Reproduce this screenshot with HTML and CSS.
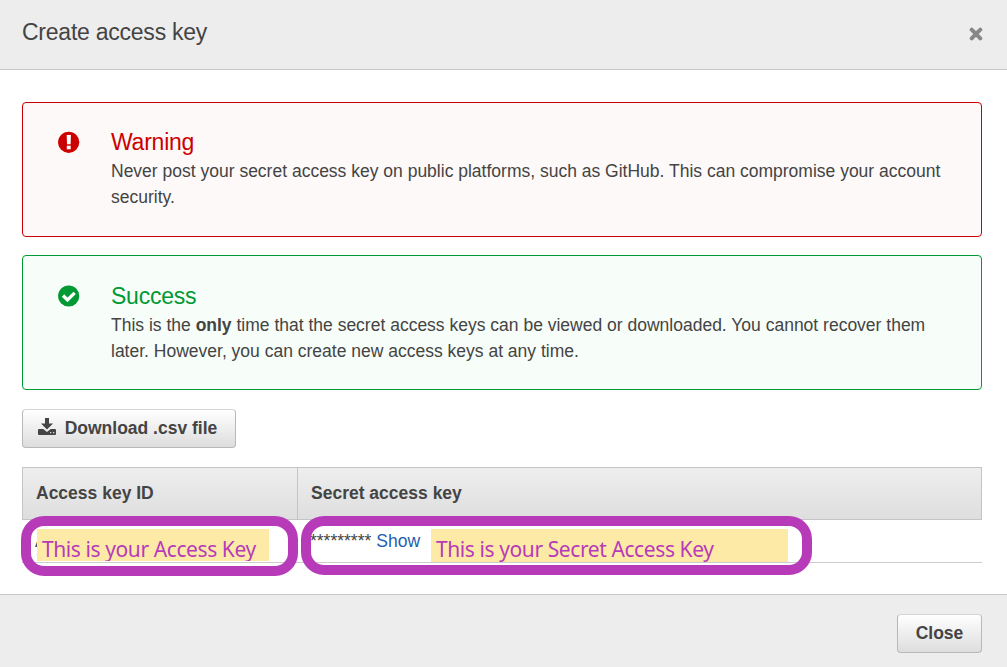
FILE: index.html
```html
<!DOCTYPE html>
<html lang="en">
<head>
<meta charset="utf-8">
<title>Create access key</title>
<link rel="stylesheet" href="styles.css">
</head>
<body>
<div class="dialog">
  <header class="dialog-header">
    <h1 class="title">Create access key</h1>
    <svg class="close-icon" viewBox="0 0 14 14"><path d="M2.7 2.7L11.3 11.3M11.3 2.7L2.7 11.3"/></svg>
  </header>
  <main class="dialog-body">
    <section class="alert warning">
      <svg class="alert-icon" viewBox="0 0 22 22"><circle cx="10.7" cy="11.3" r="10.6" fill="#c00"/><path d="M8.7 4h4.2l-.3 9.2H9z" fill="#fff"/><path d="M8.8 14.7h3.9v3.6H8.8z" fill="#fff"/></svg>
      <div class="alert-content">
        <h2 class="alert-title">Warning</h2>
        <p class="alert-text">Never post your secret access key on public platforms, such as GitHub. This can compromise your account<br>security.</p>
      </div>
    </section>
    <section class="alert success">
      <svg class="alert-icon" viewBox="0 0 22 22"><circle cx="10.7" cy="11" r="10.6" fill="#093"/><path d="M5 10.5L9.5 15L16.7 7.8" fill="none" stroke="#fff" stroke-width="3.3"/></svg>
      <div class="alert-content">
        <h2 class="alert-title">Success</h2>
        <p class="alert-text">This is the <b>only</b> time that the secret access keys can be viewed or downloaded. You cannot recover them<br>later. However, you can create new access keys at any time.</p>
      </div>
    </section>
    <button class="button download">
      <svg class="download-icon" viewBox="0 0 18 17"><path d="M7 0h4v5.5h4L9 11.5L3 5.5h4zM1 11h4.3L9 14l3.7-3H17q1 0 1 1v4q0 1-1 1H1q-1 0-1-1v-4q0-1 1-1z" fill="#444"/><path d="M12 14h1.3v1.2H12zM15 14h1.3v1.2H15z" fill="#ddd"/></svg>
      <span class="download-label">Download .csv file</span>
    </button>
    <div class="keys">
      <div class="row head"><div class="cell">Access key ID</div><div class="cell">Secret access key</div></div>
      <div class="row data"><div class="cell">A</div><div class="cell"><span class="stars">*********</span><a class="show">Show</a></div></div>
      <div class="note note-key"><span class="note-text">This is your Access Key</span></div>
      <div class="note note-secret"><span class="note-text">This is your Secret Access Key</span></div>
      <div class="ring ring-key"></div>
      <div class="ring ring-secret"></div>
    </div>
  </main>
  <footer class="dialog-footer"><button class="button close">Close</button></footer>
</div>
</body>
</html>
```
FILE: styles.css
```css
* { box-sizing: border-box; }
body { margin: 0; font: 17.5px/26px "Liberation Sans", Arial, sans-serif; color: #444; background: #fff; }
h1, h2, p { margin: 0; font-weight: 400; }
.dialog { height: 667px; display: flex; flex-direction: column; overflow: hidden; }
.dialog-header { height: 70px; flex: none; display: flex; justify-content: space-between; padding: 17px 24px 0 22px; background: #ededed; border-bottom: 1px solid #c8c8c8; }
.title { font-size: 23px; line-height: 30px; letter-spacing: -.24px; }
.close-icon { width: 14px; height: 14px; margin-top: 10px; fill: none; stroke: #888; stroke-width: 4; stroke-linecap: round; }
.dialog-body { flex: 1; padding: 32px 25px 0 22px; }
.alert { height: 135px; display: flex; border: 1px solid; border-radius: 4px; margin-bottom: 18px; padding: 24px 0 0 35px; }
.warning { color: #c00; background: #fdf9f9; }
.success { color: #093; background: #f7fdf8; padding-top: 25px; }
.alert-icon { width: 22px; height: 22px; margin: 4px 31px 0 0; flex: none; }
.alert-title { font-size: 23px; line-height: 31px; letter-spacing: -.24px; }
.alert-text { color: #444; white-space: nowrap; }
.button { display: flex; align-items: center; justify-content: center; height: 39px; padding: 0 0 2px; border: 1px solid #b8b8b8; border-top-color: #d5d5d5; border-radius: 4px; background: linear-gradient(#fff, #ddd); color: #444; font: bold 17.5px/26px "Liberation Sans", Arial, sans-serif; }
.download { width: 214px; gap: 9px; margin-top: 19px; padding-right: 3px; white-space: nowrap; }
.download-icon { width: 18px; height: 17px; margin-bottom: 3px; }
.keys { position: relative; margin-top: 19px; }
.row { display: grid; grid-template-columns: 275px 1fr; }
.head { height: 53px; font-weight: bold; border: 1px solid #c4c4c4; background: linear-gradient(#eee, #dedede); }
.head .cell { padding: 12px 13px; }
.head .cell:first-child { border-right: 1px solid #c4c4c4; }
.data { height: 43px; border-bottom: 1px solid #ccc; }
.data .cell { padding: 8px 13px; white-space: nowrap; }
.show { margin-left: 5px; color: #1f5fb0; }
.note { position: absolute; top: 62px; height: 33px; overflow: hidden; background: #fdeaa6; color: #b73bb9; font: 21px/41px "Noto Sans", sans-serif; letter-spacing: -.41px; white-space: nowrap; }
.note-key { left: 15px; width: 232px; height: 32px; padding-left: 5px; }
.note-secret { left: 409px; width: 357px; padding-left: 5px; }
.ring { position: absolute; border: 10px solid #b73bb9; border-radius: 23px; }
.ring-key { left: -1px; top: 49px; width: 277px; height: 60px; }
.ring-secret { left: 279px; top: 49px; width: 511px; height: 59px; }
.dialog-footer { height: 73px; flex: none; display: flex; justify-content: flex-end; padding: 19px 25px 0; background: #ededed; border-top: 1px solid #c8c8c8; }
.close { width: 85px; }
```
